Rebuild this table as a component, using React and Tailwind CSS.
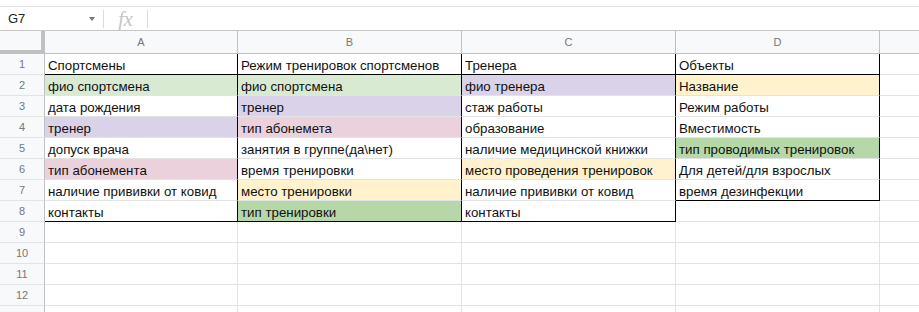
import React from 'react';

const G = '#d9ead3';
const P = '#d9d2e9';
const R = '#ead1dc';
const Y = '#fff2cc';
const G2 = '#b6d7a8';

const columns = [
  { key: 'A', width: 'w-[193px]' },
  { key: 'B', width: 'w-[224px]' },
  { key: 'C', width: 'w-[214px]' },
  { key: 'D', width: 'w-[204px]' },
];

const bgClass = {
  [G]: 'bg-[#d9ead3]',
  [P]: 'bg-[#d9d2e9]',
  [R]: 'bg-[#ead1dc]',
  [Y]: 'bg-[#fff2cc]',
  [G2]: 'bg-[#b6d7a8]',
};

// each row: [text, fill] for A..D
const rows = [
  [['Спортсмены'], ['Режим тренировок спортсменов'], ['Тренера'], ['Объекты']],
  [['фио спортсмена', G], ['фио спортсмена', G], ['фио тренера', P], ['Название', Y]],
  [['дата рождения'], ['тренер', P], ['стаж работы'], ['Режим работы']],
  [['тренер', P], ['тип абонемета', R], ['образование'], ['Вместимость']],
  [['допуск врача'], ['занятия в группе(да\\нет)'], ['наличие медицинской книжки'], ['тип проводимых тренировок', G2]],
  [['тип абонемента', R], ['время тренировки'], ['место проведения тренировок', Y], ['Для детей/для взрослых']],
  [['наличие прививки от ковид'], ['место тренировки', Y], ['наличие прививки от ковид'], ['время дезинфекции']],
  [['контакты'], ['тип тренировки', G2], ['контакты'], ['']],
  [[''], [''], [''], ['']],
  [[''], [''], [''], ['']],
  [[''], [''], [''], ['']],
  [[''], [''], [''], ['']],
  [[''], [''], [''], ['']],
];

function rightBlack(r, c) {
  if (c < 3) return r < 8;
  return r < 7;
}

function bottomBlack(r, c) {
  if (r === 0) return true;
  if (r === 7 && c < 3) return true;
  if (r === 6 && c === 3) return true;
  return false;
}

function Cell({ r, c, text, fill, width }) {
  const right = rightBlack(r, c) ? 'border-r-black' : 'border-r-[#e2e3e3]';
  const bottom = bottomBlack(r, c) ? 'border-b-black' : 'border-b-[#e2e3e3]';
  const bg = fill ? bgClass[fill] : 'bg-white';
  return (
    <div
      className={`${width} h-[21px] shrink-0 border-r border-b ${right} ${bottom} ${bg} flex items-end px-[3px] pb-0 overflow-hidden whitespace-nowrap text-[13.3px] leading-[16px] text-[#111]`}
    >
      {text}
    </div>
  );
}

export default function App() {
  return (
    <div className="w-[919px] h-[312px] overflow-hidden bg-white" style={{ fontFamily: '"Liberation Sans", Arial, sans-serif' }}>
      {/* formula bar */}
      <div className="h-[7px] border-b border-[#e2e3e3]" />
      <div className="h-[24px] flex items-center border-b border-[#c7c7c7]">
        <div className="w-[103px] flex items-center justify-between pl-[8px] pr-[8px]">
          <span className="text-[13px] text-[#222]">G7</span>
          <svg width="6" height="4" viewBox="0 0 6 4" className="mt-[1px]">
            <path d="M0 0 L6 0 L3 4 Z" fill="#777" />
          </svg>
        </div>
        <div className="w-px h-[18px] bg-[#dadce0]" />
        <div className="w-[43px] flex items-center justify-center">
          <span className="text-[20px] italic text-[#c4c4c4] leading-none" style={{ fontFamily: '"Liberation Serif", serif' }}>fx</span>
        </div>
        <div className="w-px h-[18px] bg-[#dadce0]" />
      </div>

      {/* column headers */}
      <div className="flex h-[23px]">
        <div className="w-[45px] shrink-0 bg-[#f8f9fa] border-r-[4px] border-b-[4px] border-[#c0c0c0]" />
        {columns.map((col) => (
          <div
            key={col.key}
            className={`${col.width} shrink-0 bg-[#f8f9fa] border-r border-b border-[#c0c0c0] flex items-center justify-center text-[11px] text-[#777]`}
          >
            {col.key}
          </div>
        ))}
        <div className="flex-1 bg-[#f8f9fa] border-b border-[#c0c0c0]" />
      </div>

      {/* rows */}
      {rows.map((row, r) => (
        <div key={r} className="flex h-[21px]">
          <div className="w-[45px] shrink-0 bg-[#f8f9fa] border-r border-b border-r-[#c0c0c0] border-b-[#e2e3e3] flex items-center justify-center text-[11px] text-[#777]">
            {r < 12 ? r + 1 : ''}
          </div>
          {row.map(([text, fill], c) => (
            <Cell key={c} r={r} c={c} text={text} fill={fill} width={columns[c].width} />
          ))}
          <div className="flex-1 h-[21px] border-b border-[#e2e3e3]" />
        </div>
      ))}
    </div>
  );
}
